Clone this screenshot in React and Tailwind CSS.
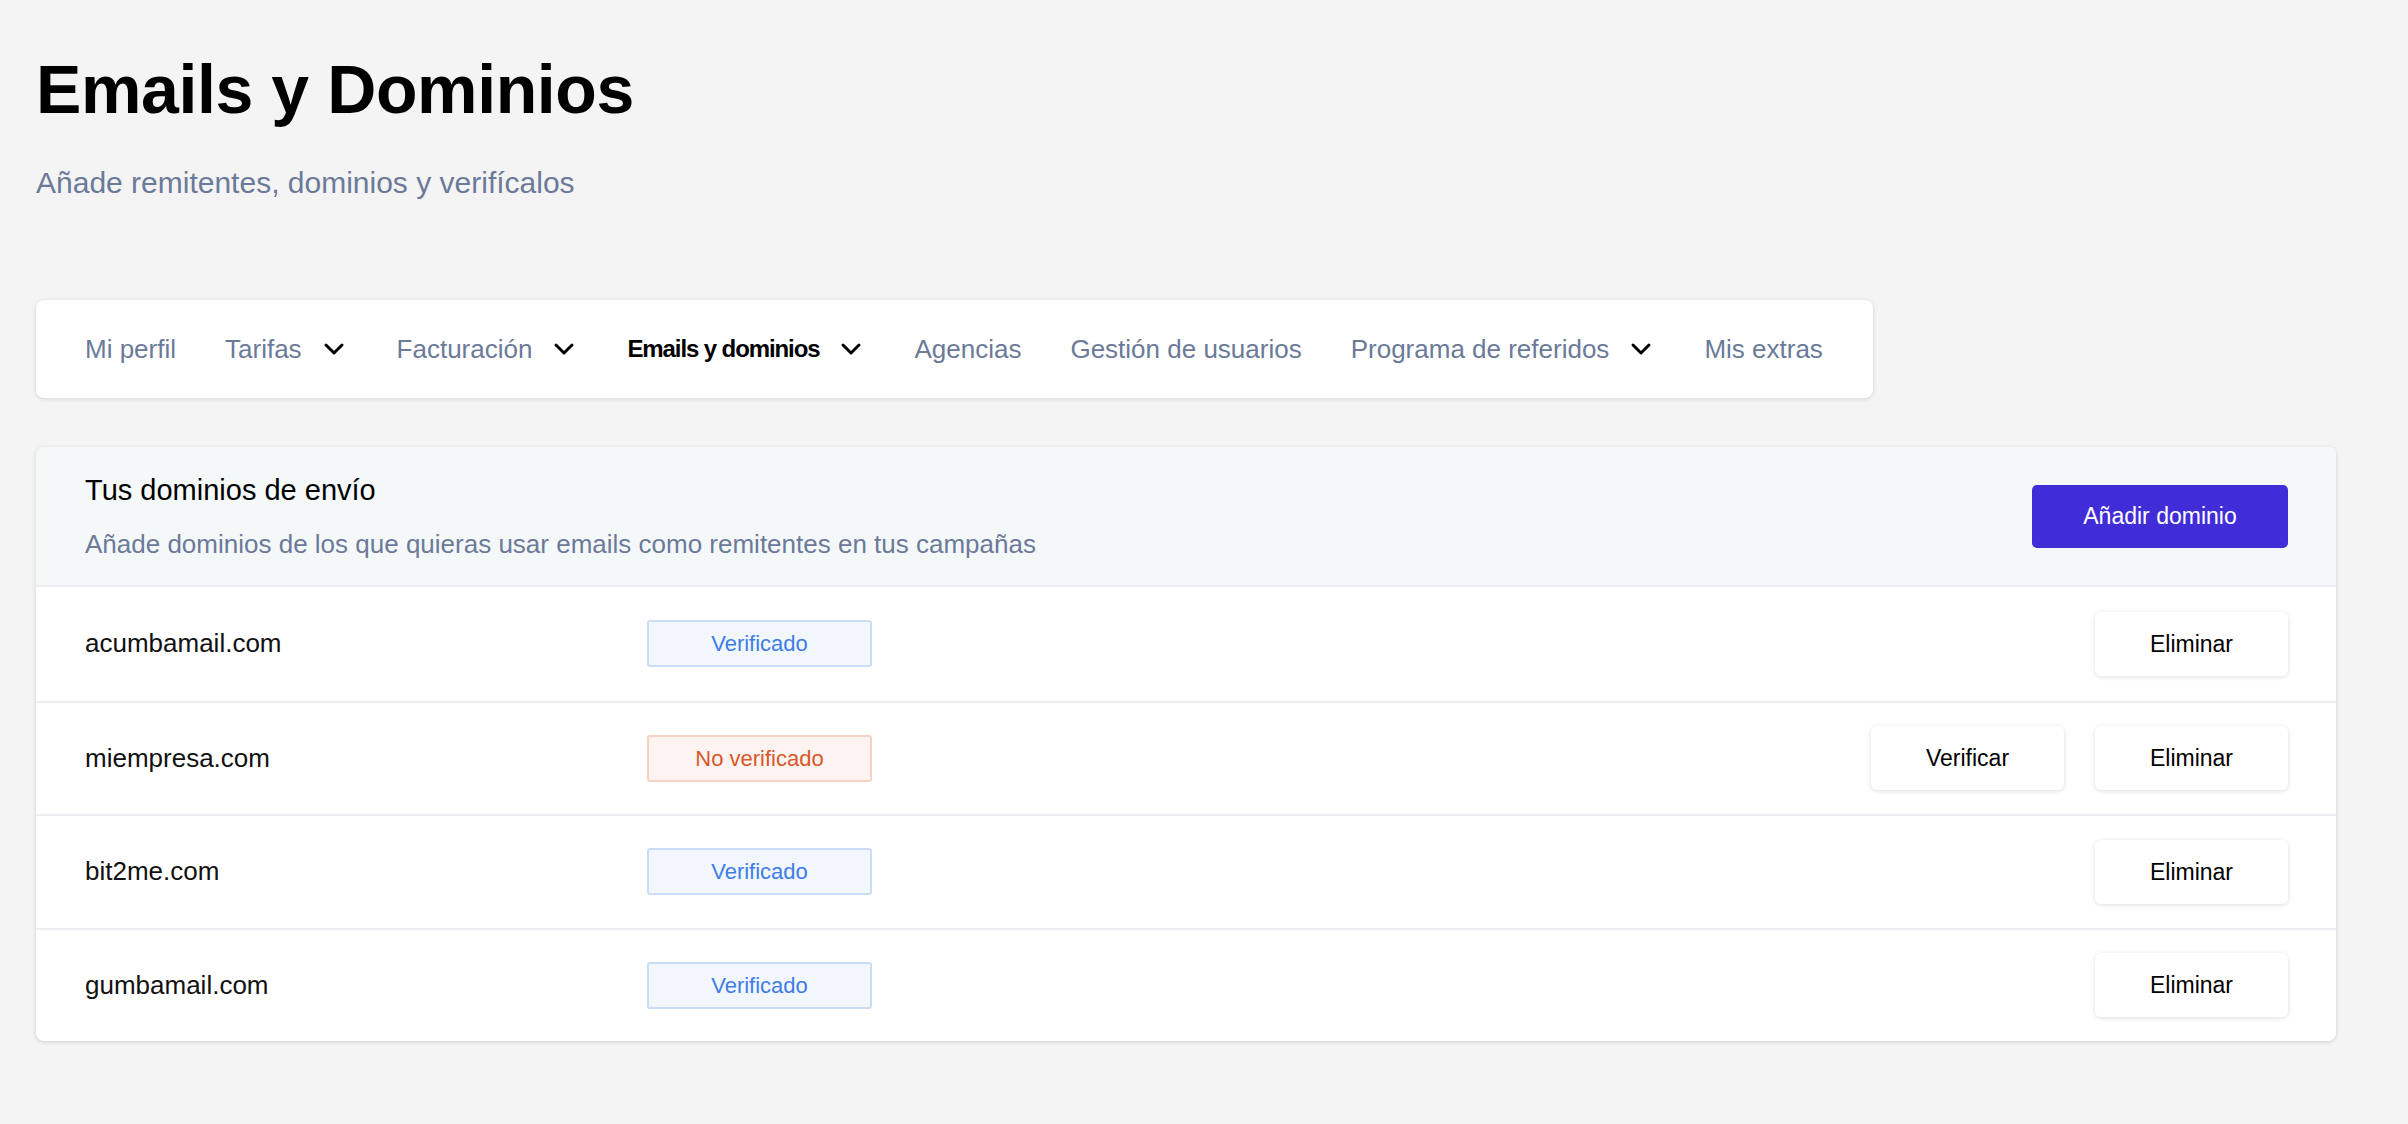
import React from "react";

const domains = [
    { name: "acumbamail.com", verified: true },
    { name: "miempresa.com", verified: false },
    { name: "bit2me.com", verified: true },
    { name: "gumbamail.com", verified: true },
];

const tabs = [
    { label: "Mi perfil" },
    { label: "Tarifas", menu: true },
    { label: "Facturación", menu: true },
    { label: "Emails y dominios", menu: true, active: true },
    { label: "Agencias" },
    { label: "Gestión de usuarios" },
    { label: "Programa de referidos", menu: true },
    { label: "Mis extras" },
];

const Chevron = () => (
    <svg width="22" height="14" viewBox="0 0 22 14" className="ml-[21px] mr-[3px] shrink-0">
        <polyline points="3,3 11,11 19,3" fill="none" stroke="#000" strokeWidth="3" strokeLinecap="round" strokeLinejoin="round" />
    </svg>
);

export const App = () => {
    return (
        <div className="min-h-[1124px] bg-[#f4f4f4] pl-[36px] pr-[72px] pt-[55px] pb-10 font-['Liberation_Sans',Arial,sans-serif]">
            <h1 className="text-[68px] leading-[68px] font-bold text-black tracking-[-0.4px]">Emails y Dominios</h1>
            <p className="mt-[42px] text-[30px] leading-[36px] text-[#6b7a99]">Añade remitentes, dominios y verifícalos</p>

            <nav className="mt-[99px] w-fit h-[98px] bg-white rounded-[8px] shadow-[0_1px_4px_rgba(0,0,0,0.14)] flex items-center gap-[49px] pl-[49px] pr-[50px]">
                {tabs.map((tab) => (
                    <div key={tab.label} className="flex items-center">
                        <span
                            className={
                                tab.active
                                    ? "text-[24px] font-bold text-black tracking-[-1.1px]"
                                    : "text-[26px] text-[#6b7a99]"
                            }
                        >
                            {tab.label}
                        </span>
                        {tab.menu && <Chevron />}
                    </div>
                ))}
            </nav>

            <section className="mt-[49px] bg-white rounded-[8px] shadow-[0_1px_4px_rgba(0,0,0,0.15)] overflow-hidden">
                <div className="h-[140px] bg-[#f5f8f9] border-b-2 border-[#eceef2] flex items-center justify-between pl-[49px] pr-[48px]">
                    <div className="flex flex-col gap-[20px]">
                        <h2 className="text-[29px] leading-[36px] text-black">Tus dominios de envío</h2>
                        <p className="text-[26px] leading-[32px] text-[#6b7a99]">
                            Añade dominios de los que quieras usar emails como remitentes en tus campañas
                        </p>
                    </div>
                    <button className="w-[256px] h-[63px] rounded-[5px] bg-[#412dd8] text-white text-[23px]">Añadir dominio</button>
                </div>

                {domains.map((d, i) => (
                    <div
                        key={d.name}
                        className={`h-[113.5px] flex items-center pl-[49px] pr-[48px] ${i > 0 ? "border-t-2 border-[#eceef2]" : ""}`}
                    >
                        <span className="w-[562px] text-[26px] text-[#111]">{d.name}</span>
                        {d.verified ? (
                            <span className="w-[225px] h-[47px] flex items-center justify-center rounded-[3px] border-2 border-[#c9ddf7] bg-[#f2f7fd] text-[22px] text-[#3f7de6]">
                                Verificado
                            </span>
                        ) : (
                            <span className="w-[225px] h-[47px] flex items-center justify-center rounded-[3px] border-2 border-[#f6d2c3] bg-[#fdf4f1] text-[22px] text-[#d9572b]">
                                No verificado
                            </span>
                        )}
                        <div className="ml-auto flex items-center gap-[31px]">
                            {!d.verified && (
                                <button className="w-[193px] h-[64px] rounded-[6px] bg-white shadow-[0_1px_5px_rgba(0,0,0,0.13)] text-[23px] text-black">
                                    Verificar
                                </button>
                            )}
                            <button className="w-[193px] h-[64px] rounded-[6px] bg-white shadow-[0_1px_5px_rgba(0,0,0,0.13)] text-[23px] text-black">
                                Eliminar
                            </button>
                        </div>
                    </div>
                ))}
            </section>
        </div>
    );
};

export default App;
